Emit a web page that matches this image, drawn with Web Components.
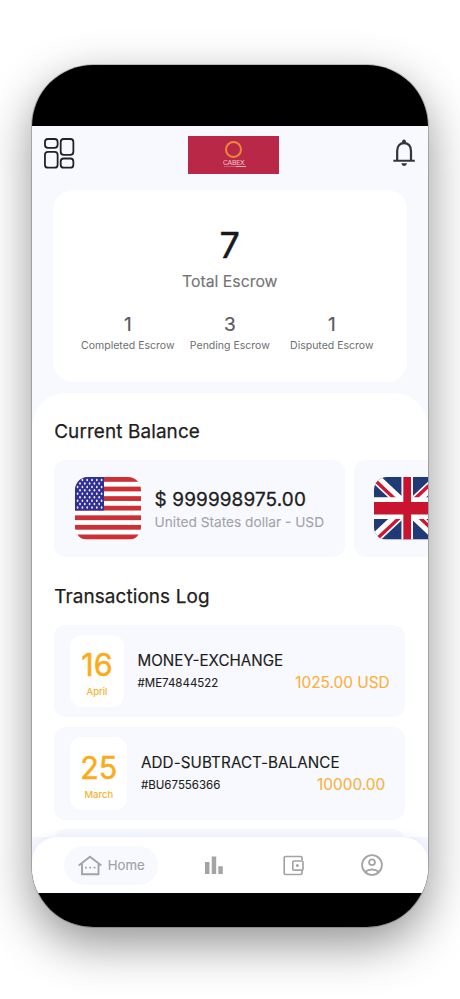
<!DOCTYPE html>
<html lang="en">
<head>
<meta charset="utf-8">
<title>Escrow wallet</title>
<style>
html,body{margin:0;height:999px;overflow:hidden;background:#fff;font-family:Inter,"Liberation Sans",sans-serif}
</style>
</head>
<body>
<phone-frame>
  <app-header slot="header"></app-header>
  <escrow-summary total="7" label="Total Escrow">
    <escrow-stat value="1">Completed Escrow</escrow-stat>
    <escrow-stat value="3">Pending Escrow</escrow-stat>
    <escrow-stat value="1">Disputed Escrow</escrow-stat>
  </escrow-summary>
  <content-sheet>
    <section-title>Current Balance</section-title>
    <balance-strip>
      <balance-card amount="$ 999998975.00" currency="United States dollar - USD"><flag-us></flag-us></balance-card>
      <balance-card><flag-uk></flag-uk></balance-card>
    </balance-strip>
    <section-title>Transactions Log</section-title>
    <transaction-list>
      <transaction-row day="16" month="April" name="MONEY-EXCHANGE" ref="#ME74844522" amount="1025.00 USD" style="--tile:54px;--end:15.5px"></transaction-row>
      <transaction-row day="25" month="March" name="ADD-SUBTRACT-BALANCE" ref="#BU67556366" amount="10000.00" style="--tile:57.5px;--end:20px;--track:.09px"></transaction-row>
      <transaction-row></transaction-row>
    </transaction-list>
  </content-sheet>
  <nav-bar slot="nav">
    <nav-item active icon="home">Home</nav-item>
    <nav-item icon="chart"></nav-item>
    <nav-item icon="wallet"></nav-item>
    <nav-item icon="account"></nav-item>
  </nav-bar>
</phone-frame>
<script>
const define = (name, render) => customElements.define(name, class extends HTMLElement {
  connectedCallback() {
    if (this.shadowRoot) return;
    const attr = key => this.getAttribute(key) || '';
    this.attachShadow({ mode: 'open' }).innerHTML = render(attr, this);
  }
});

define('phone-frame', () => `<style>
:host{display:block;box-sizing:border-box;height:999px;padding:64.5px 32.3px 72.5px 32.4px}
.phone{box-sizing:border-box;height:862px;border-radius:61px;background:#000;overflow:hidden;padding:61px 0 33.3px;display:flex;flex-direction:column}
.shadow{border-radius:61px;box-shadow:0 0 0 .8px rgba(0,0,0,.25),0 17px 48px rgba(0,0,0,.43)}
.screen{flex:1;min-height:0;background:#f8f9ff;display:grid;grid-template:minmax(0,1fr) 56.5px/minmax(0,1fr)}
main{overflow:hidden;min-height:0}
</style><div class="shadow"><div class="phone"><div class="screen"><main><slot name="header"></slot><slot></slot></main><slot name="nav"></slot></div></div></div>`);

define('app-header', () => `<style>
:host{display:flex;justify-content:space-between;align-items:flex-start;height:54.3px;padding:10.2px 13px 0 11.9px}
svg{display:block}
.menu{margin-top:2.3px;width:30.4px;height:30.7px}
.bell{margin-top:3.4px;width:22px;height:27.3px}
.logo{box-sizing:border-box;width:91.4px;height:38.5px;background:#b92947;display:flex;flex-direction:column;align-items:center;padding-top:5.3px}
.ring{box-sizing:border-box;width:17px;height:17px;border:2.1px solid #ea8738;border-radius:50%}
.name{font-size:6.8px;line-height:7px;letter-spacing:-.25px;color:#f4cbd0;margin-top:.8px}
.rule{width:22px;height:1.2px;margin-left:3px;background:linear-gradient(90deg,#cb6074 55%,#e9b4bc 55%)}
</style>
<svg class="menu" viewBox="73 264 91 92" fill="none" stroke="#222226" stroke-width="5.4"><rect x="75.8" y="267" width="38" height="26.5" rx="9"/><rect x="123" y="267" width="38" height="47.5" rx="9"/><rect x="75.8" y="305.5" width="38" height="47.5" rx="9"/><rect x="123" y="325.5" width="38" height="27.5" rx="9"/></svg>
<div class="logo"><div class="ring"></div><div class="name">CABEX</div><div class="rule"></div></div>
<svg class="bell" viewBox="488.5 267 66 82" fill="none" stroke="#35353a" stroke-width="6.8"><path d="M501 331V303C501 288 509 279 521.500 279S542.500 288 542.500 303V331"/><path d="M489.500 332.500H554" stroke-width="6"/><circle cx="521.500" cy="274" r="5.500" fill="#35353a" stroke="none"/><path d="M513.500 340H530.500C529 346 526 348 522 348S515 346 513.500 340Z" fill="#35353a" stroke="none"/></svg>`);

define('escrow-summary', a => `<style>
:host{display:flex;flex-direction:column;align-items:center;box-sizing:border-box;margin:0 21px 0 20.5px;height:192.500px;background:#fff;border-radius:20px;padding-top:33px}
.total{font-size:36px;line-height:44px;color:#19191c;-webkit-text-stroke:.5px #19191c}
.label{font-size:15.800px;line-height:20px;color:#757577;margin-top:5px;-webkit-text-stroke:.15px #757577}
.stats{display:grid;grid-template-columns:104px 100px 104px;margin-top:20.800px;width:308px}
</style><div class="total">${a('total')}</div><div class="label">${a('label')}</div><div class="stats"><slot></slot></div>`);

define('escrow-stat', a => `<style>
:host{display:flex;flex-direction:column;align-items:center;color:#6d6d70;font-size:10.5px;white-space:nowrap}
b{font-weight:400;font-size:19px;line-height:24px;color:#58585b;-webkit-text-stroke:.2px #58585b}
span{line-height:14px;margin-top:2.200px}
</style><b>${a('value')}</b><span><slot></slot></span>`);

define('content-sheet', () => `<style>
:host{display:flex;flex-direction:column;box-sizing:border-box;margin-top:10.700px;height:520px;background:#fff;border-radius:34px 34px 0 0;padding:26.5px 0 0 21.800px}
</style><slot></slot>`);

define('section-title', () => `<style>
:host{display:block;flex:none;height:24px;font-size:18.900px;letter-spacing:.12px;line-height:24px;color:#1d1d20;-webkit-text-stroke:.25px #1d1d20}
</style><slot></slot>`);

define('balance-strip', () => `<style>
:host{display:grid;flex:none;grid-template-columns:291px 291px;gap:8.500px;height:97px;margin:16.200px 0 28px;overflow:hidden}
</style><slot></slot>`);

define('balance-card', a => `<style>
:host{display:flex;align-items:center;box-sizing:border-box;background:#f8f9ff;border-radius:12px;padding-left:20.700px}
.text{margin-left:13.300px;padding-top:2.800px;white-space:nowrap}
.amount{font-size:18.900px;letter-spacing:.15px;line-height:24px;color:#1d1d20;-webkit-text-stroke:.3px #1d1d20}
.currency{font-size:13.700px;line-height:18px;color:#a3a3a8;margin-top:.800px;-webkit-text-stroke:.1px #a3a3a8}
</style><slot></slot><div class="text"><div class="amount">${a('amount')}</div><div class="currency">${a('currency')}</div></div>`);

const flagBox = `<style>:host{display:block;flex:none;width:66.400px;height:62.300px;border-radius:13px;overflow:hidden}svg{display:block;width:100%;height:100%}</style>`;

define('flag-us', () => {
  let stripes = '', stars = '';
  for (let i = 0; i < 13; i += 2) stripes += `<rect y="${i * 4.8}" width="66.400" height="4.800"/>`;
  for (let r = 0; r < 9; r++) {
    const odd = r % 2;
    for (let c = 0; c < (odd ? 5 : 6); c++) stars += `<ellipse cx="${2.6 + c * 4.8 + odd * 2.4}" cy="${3 + r * 3.45}" rx=".850" ry="1.250"/>`;
  }
  return flagBox + `<svg viewBox="0 0 66.400 62.400" preserveAspectRatio="none"><rect width="66.400" height="62.400" fill="#fff"/><g fill="#cc3034">${stripes}</g><rect width="29" height="33.600" fill="#313092"/><g fill="#f1f1fb">${stars}</g></svg>`;
});

define('flag-uk', () => flagBox + `<svg viewBox="0 0 60 30" preserveAspectRatio="none"><defs><clipPath id="q"><path d="M30 15h30v15zv15H0zH0V0zV0h30z"/></clipPath></defs><rect width="60" height="30" fill="#203a76"/><path d="M0 0L60 30M60 0L0 30" stroke="#fff" stroke-width="6"/><path d="M0 0L60 30M60 0L0 30" clip-path="url(#q)" stroke="#cf1733" stroke-width="4"/><path d="M30 0V30M0 15H60" stroke="#fff" stroke-width="10.400"/><path d="M30 0V30" stroke="#c91430" stroke-width="7"/><path d="M0 15H60" stroke="#c91430" stroke-width="6"/></svg>`);

define('transaction-list', () => `<style>
:host{display:grid;grid-auto-rows:92.500px;gap:9.700px;margin-top:16px;width:351px}
</style><slot></slot>`);

define('transaction-row', a => `<style>
:host{display:grid;grid-template-columns:var(--tile,54px) 1fr;column-gap:13.500px;align-items:center;box-sizing:border-box;background:#f8f9ff;border-radius:12px;padding:0 var(--end,15px) 0 15.800px}
.date{height:72.500px;border-radius:12px;background:#fff;color:#fbab18;display:flex;flex-direction:column;align-items:center;box-sizing:border-box;padding-top:11.500px}
.day{font-size:30.500px;line-height:37px;-webkit-text-stroke:.5px #fbab18}
.month{font-size:9.600px;line-height:13px;margin-top:2px;-webkit-text-stroke:.1px #fbab18}
.text{padding-top:2.400px}
.name{font-size:15.200px;letter-spacing:var(--track,0);line-height:20px;color:#1d1d20;white-space:nowrap;-webkit-text-stroke:.15px #1d1d20}
.line{display:flex;justify-content:space-between;align-items:center;height:22px;margin-top:.600px}
.ref{font-size:11.500px;color:#1d1d20;-webkit-text-stroke:.1px #1d1d20}
.amount{font-size:15.400px;color:#f8b23c;-webkit-text-stroke:.15px #f8b23c}
</style>` + (a('day') ? `<div class="date"><div class="day">${a('day')}</div><div class="month">${a('month')}</div></div>
<div class="text"><div class="name">${a('name')}</div><div class="line"><span class="ref">${a('ref')}</span><span class="amount">${a('amount')}</span></div></div>` : ''));

define('nav-bar', () => `<style>
:host{display:block;position:relative;background:#f5f7fe}
.bar{box-sizing:border-box;height:100%;background:#fff;border-radius:25px 25px 0 0;box-shadow:0 -2px 8px rgba(70,100,200,.08);display:grid;grid-template-columns:140.800px 78.500px 78px 22px;align-items:center;padding:1px 0 0 31.600px}
</style><div class="bar"><slot></slot></div>`);

const icons = {
  home: `<svg width="24" height="21" viewBox="0 0 24 21" fill="none" stroke="#a4a4a7" stroke-width="1.900"><path d="M.700 10.500L12 1.700L23.300 10.500M4 8.500V19.200H20.500V8.500"/><path d="M7 12.700h1.800M11.300 12.700h1.800M15.600 12.700h1.800" stroke-width="1.700"/></svg>`,
  chart: `<svg width="18" height="18" viewBox="0 0 18 18" fill="#a4a4a7"><path d="M0 6h4.500v12H0zM6.700 .500h4.500V18H6.700zM13.300 10.300h4.500V18h-4.500z"/></svg>`,
  wallet: `<svg width="21" height="21" viewBox="0 0 21 21" fill="none" stroke="#a4a4a7" stroke-width="1.700"><path d="M19 5.300V3Q19 1.500 17.500 1.500H2.500Q1.200 1.500 1.200 3V18Q1.200 19.500 2.500 19.500H17.500Q19 19.500 19 18V15.500"/><rect x="9.800" y="6" width="10.200" height="9.200" rx="1.200"/><circle cx="14.300" cy="10.600" r="1.500" fill="#a4a4a7" stroke="none"/></svg>`,
  account: `<svg width="22" height="22" viewBox="0 0 22 22" fill="none" stroke="#a4a4a7" stroke-width="1.800"><circle cx="11" cy="11" r="9.900"/><circle cx="11" cy="8.200" r="2.900"/><path d="M4.200 17.800Q7 15.500 11 15.500T17.800 17.800"/></svg>`
};
define('nav-item', (a, el) => `<style>
:host{display:flex;align-items:center;color:#a0a0a4;font-size:13.200px;-webkit-text-stroke:.15px #a0a0a4}
:host([active]){box-sizing:border-box;width:94.300px;height:38.300px;border-radius:20px;background:#f8f9ff;padding-left:13.700px;gap:6px}
svg{display:block;flex:none}
</style>${icons[a('icon')]}` + (el.hasAttribute('active') ? `<slot></slot>` : ''));
</script>
</body>
</html>
